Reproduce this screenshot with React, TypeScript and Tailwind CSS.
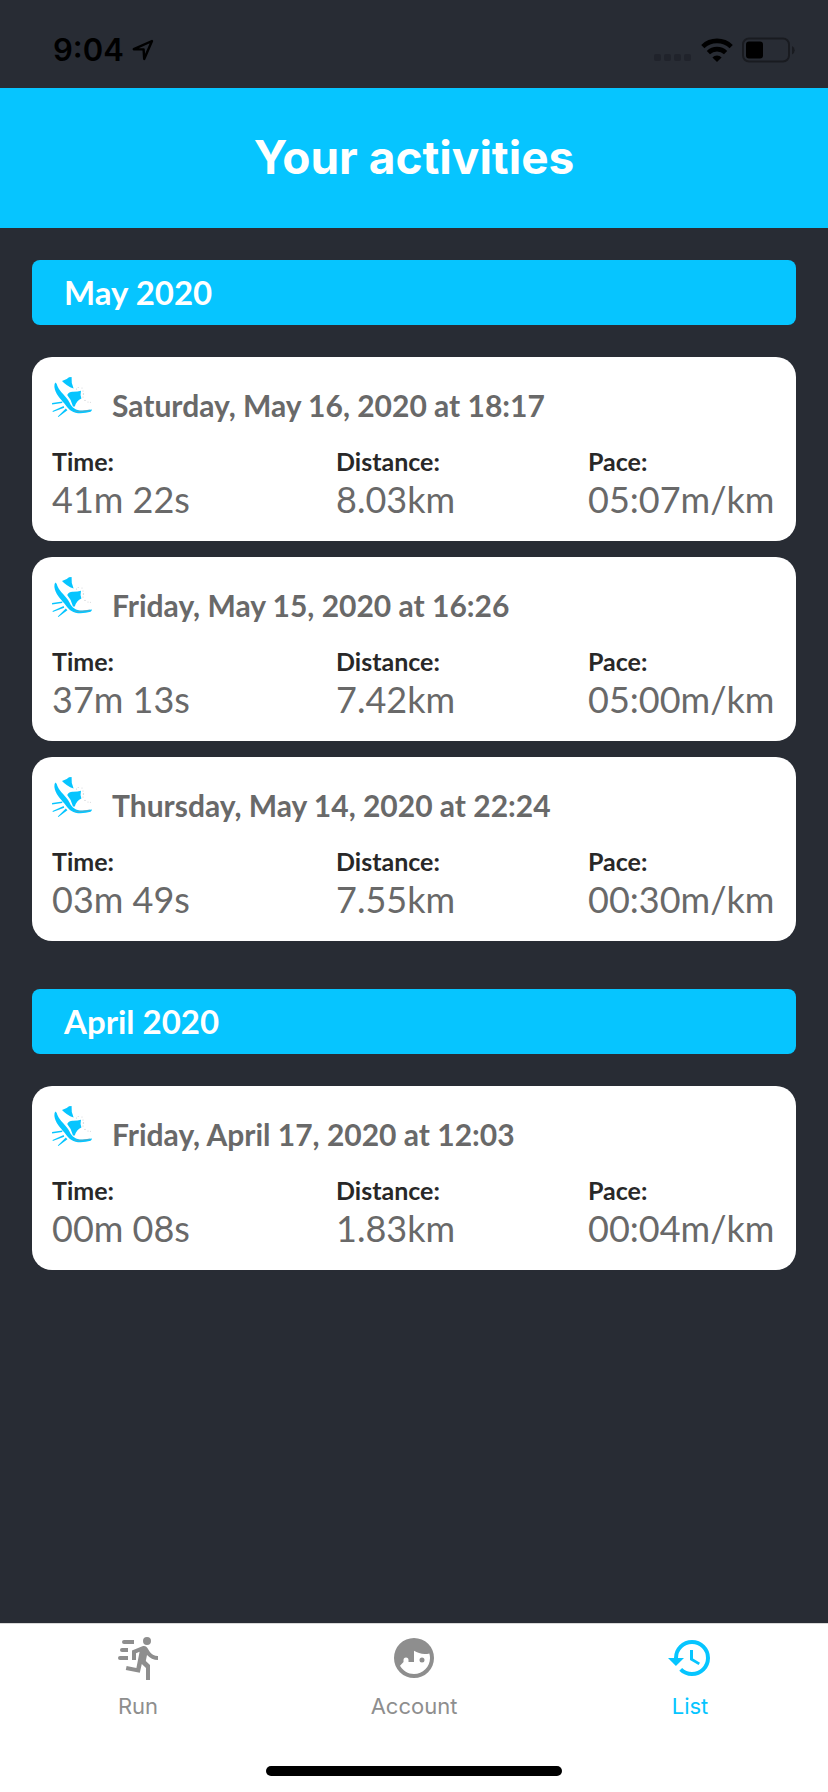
import React from "react";

type Activity = { date: string; time: string; distance: string; pace: string };
type Month = { name: string; activities: Activity[] };

const months: Month[] = [
  {
    name: "May 2020",
    activities: [
      { date: "Saturday, May 16, 2020 at 18:17", time: "41m 22s", distance: "8.03km", pace: "05:07m/km" },
      { date: "Friday, May 15, 2020 at 16:26", time: "37m 13s", distance: "7.42km", pace: "05:00m/km" },
      { date: "Thursday, May 14, 2020 at 22:24", time: "03m 49s", distance: "7.55km", pace: "00:30m/km" },
    ],
  },
  {
    name: "April 2020",
    activities: [
      { date: "Friday, April 17, 2020 at 12:03", time: "00m 08s", distance: "1.83km", pace: "00:04m/km" },
    ],
  },
];

const tabs = [
  {
    label: "Run",
    active: false,
    path: "M16.5,5.5A2,2 0 0,0 18.5,3.5A2,2 0 0,0 16.5,1.5A2,2 0 0,0 14.5,3.5A2,2 0 0,0 16.5,5.5M12.9,19.4L13.9,15L16,17V23H18V15.5L15.9,13.5L16.5,10.5C17.89,12.09 19.89,13 22,13V11C20.24,11.03 18.6,10.11 17.7,8.6L16.7,7C16.34,6.4 15.7,6 15,6C14.7,6 14.5,6.1 14.2,6.1L9,8.3V13H11V9.6L12.8,8.9L11.2,17L6.3,16L5.9,18L12.9,19.4M4,9A1,1 0 0,1 3,8A1,1 0 0,1 4,7H7V9H4M5,5A1,1 0 0,1 4,4A1,1 0 0,1 5,3H10V5H5M3,13A1,1 0 0,1 2,12A1,1 0 0,1 3,11H7V13H3Z",
  },
  {
    label: "Account",
    active: false,
    path: "M12,2A10,10 0 0,0 2,12A10,10 0 0,0 12,22A10,10 0 0,0 22,12A10,10 0 0,0 12,2M12,8.39C13.57,9.4 15.42,10 17.42,10C18.2,10 18.95,9.91 19.67,9.74C19.88,10.45 20,11.21 20,12C20,16.41 16.41,20 12,20C9,20 6.39,18.34 5,15.89L6.75,14V13A1.25,1.25 0 0,1 8,11.75A1.25,1.25 0 0,1 9.25,13V14H12M16,11.75A1.25,1.25 0 0,0 14.75,13A1.25,1.25 0 0,0 16,14.25A1.25,1.25 0 0,0 17.25,13A1.25,1.25 0 0,0 16,11.75Z",
  },
  {
    label: "List",
    active: true,
    path: "M13.5,8H12V13L16.28,15.54L17,14.33L13.5,12.25V8M13,3A9,9 0 0,0 4,12H1L4.96,16.03L9,12H6A7,7 0 0,1 13,5A7,7 0 0,1 20,12A7,7 0 0,1 13,19C11.07,19 9.32,18.21 8.06,16.94L6.64,18.36C8.27,20 10.5,21 13,21A9,9 0 0,0 22,12A9,9 0 0,0 13,3",
  },
];

function StatusBar() {
  return (
    <div className="flex h-[88px] items-center justify-between pt-3 pr-8 pl-[53px] text-black">
      <div className="flex items-center gap-2">
        <span className="text-[31px] leading-10 font-semibold">9:04</span>
        <svg className="size-[22px]" viewBox="0 0 22 22" fill="none" stroke="currentColor" strokeWidth="2.4" strokeLinejoin="round" aria-hidden="true">
          <path d="M20 2 L1.8 10.2 L11.6 10.4 L12.2 20 Z" />
        </svg>
      </div>
      <div className="flex items-center gap-[9px]">
        <svg className="h-6 w-[38px]" viewBox="0 0 38 24" aria-hidden="true">
          <g fill="#20232b">
            <rect x="0" y="16" width="7" height="7" rx="2" />
            <rect x="10" y="16" width="7" height="7" rx="2" />
            <rect x="20" y="16" width="7" height="7" rx="2" />
            <rect x="30" y="16" width="7" height="7" rx="2" />
          </g>
        </svg>
        <svg className="h-6 w-8" viewBox="0 0 32 24" aria-hidden="true">
          <g fill="none" stroke="currentColor" strokeWidth="4.6">
            <path d="M1.8 8.6 A20.5 20.5 0 0 1 30.2 8.6" />
            <path d="M7.4 14.6 A12.4 12.4 0 0 1 24.6 14.6" />
          </g>
          <path d="M16 24 L11.4 19.4 A6.6 6.6 0 0 1 20.6 19.4 Z" fill="currentColor" />
        </svg>
        <svg className="h-[26px] w-[54px]" viewBox="0 0 54 26" aria-hidden="true">
          <rect x="1" y="1.5" width="46" height="23" rx="6" fill="none" stroke="#191b20" strokeWidth="2" />
          <rect x="4" y="4.5" width="17" height="17" rx="3" fill="currentColor" />
          <path d="M50 9 A4.6 4.6 0 0 1 50 17.4 Z" fill="#191b20" />
        </svg>
      </div>
    </div>
  );
}

function ShoeIcon() {
  return (
    <svg className="size-10 shrink-0 text-[#06c5ff]" viewBox="0 0 40 40" fill="currentColor" aria-hidden="true">
      <path d="M10 4 Q15 2.5 17 0.2 L19.6 0 L19.8 6 L21.6 11.6 Q14.5 9 10 4 Z" />
      <path d="M3.2 5.5 Q5 6 5.4 9 C8 15.5 14 18.5 17.5 25.5 C20 31 24 33.4 30 33.6 C34 33.7 37 32.6 40 32.6 Q39.8 34 38.6 34.8 Q33 36.6 26 36.2 C19 35.4 16 31.5 12.4 26.5 C8.4 21.5 3.2 17 2.4 10 Q2.2 7 3.2 5.5 Z" />
      <path d="M15.2 18 Q17 14.6 21 14.8 Q26 14.6 29 13.8 Q28 17.5 29.4 21.5 Q24.6 23.5 22.8 29.4 L21 29.4 Q19.6 23 15.2 18 Z" />
      <path d="M0 26 L10.4 24.6 L10.2 26 L0.2 27.4 Z M0.6 34 L11.6 29 L12.2 30.8 L0.8 35 Z M5.8 39.4 L13.8 31.6 L15.4 33.2 L6.4 40 Z" />
      <g fill="#c9cdd0">
        <circle cx="24.5" cy="12" r="0.6" />
        <circle cx="26.2" cy="10.6" r="0.5" />
        <circle cx="30" cy="11" r="0.5" />
        <circle cx="31" cy="14" r="0.6" />
        <circle cx="31.4" cy="17" r="0.7" />
        <circle cx="31" cy="20" r="0.6" />
        <circle cx="33" cy="23.4" r="0.6" />
        <circle cx="36" cy="25" r="0.5" />
        <circle cx="38.4" cy="25.2" r="0.5" />
      </g>
      <path d="M23 34.4 Q31 34.6 38 33" fill="none" stroke="#7f9aa5" strokeWidth="0.6" />
    </svg>
  );
}

function Stat({ label, value }: { label: string; value: string }) {
  return (
    <div>
      <dt className="text-[25px] leading-8 font-bold text-[#282828]">{label}</dt>
      <dd className="text-[36px] leading-[44px] text-[#696969]">{value}</dd>
    </div>
  );
}

function ActivityCard({ activity }: { activity: Activity }) {
  return (
    <li className="rounded-[20px] bg-white p-5">
      <div className="flex h-[68px] gap-5">
        <ShoeIcon />
        <h3 className="pt-[10px] text-[30px] leading-9 font-bold text-[#696969]">{activity.date}</h3>
      </div>
      <dl className="grid grid-cols-[284fr_252fr_188fr] whitespace-nowrap">
        <Stat label="Time:" value={activity.time} />
        <Stat label="Distance:" value={activity.distance} />
        <Stat label="Pace:" value={activity.pace} />
      </dl>
    </li>
  );
}

export default function App() {
  return (
    <div className="flex min-h-screen flex-col bg-[#282c34] font-['Inter',sans-serif]">
      <StatusBar />
      <header className="flex h-[140px] items-center justify-center bg-[#06c5ff] pb-[2px]">
        <h1 className="text-[46px] leading-[56px] font-bold text-white">Your activities</h1>
      </header>
      <main className="flex flex-1 flex-col gap-12 p-8 font-['Lato',sans-serif]">
        {months.map((month) => (
          <section key={month.name}>
            <h2 className="rounded-lg bg-[#06c5ff] px-8 py-3 text-[33px] leading-[41px] font-bold text-white">{month.name}</h2>
            <ul className="mt-8 flex flex-col gap-4">
              {month.activities.map((activity) => (
                <ActivityCard key={activity.date} activity={activity} />
              ))}
            </ul>
          </section>
        ))}
      </main>
      <footer className="border-t border-[#d8d8d8] bg-white pb-4">
        <nav className="grid h-[142px] grid-cols-3 items-start pt-[10px]">
          {tabs.map((tab) => (
            <a
              key={tab.label}
              href={`#${tab.label.toLowerCase()}`}
              aria-current={tab.active ? "page" : undefined}
              className={
                tab.active
                  ? "flex flex-col items-center gap-[10px] text-[#06c5ff]"
                  : "flex flex-col items-center gap-[10px] text-[#8e8e8e]"
              }
            >
              <svg className="size-12" viewBox="0 0 24 24" fill="currentColor" aria-hidden="true">
                <path d={tab.path} />
              </svg>
              <span className="text-[22px] leading-7">{tab.label}</span>
            </a>
          ))}
        </nav>
        <div className="mx-auto h-[10px] w-[296px] rounded-full bg-black" />
      </footer>
    </div>
  );
}
